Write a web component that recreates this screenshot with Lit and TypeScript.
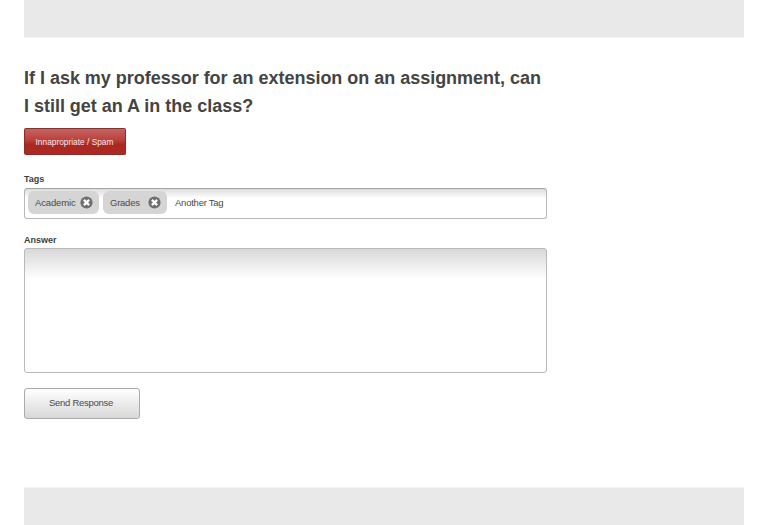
import { LitElement, html, css } from "lit";
import { customElement, property, state } from "lit/decorators.js";

@customElement("tag-chip")
class TagChip extends LitElement {
  @property() label = "";

  static styles = css`
    :host {
      display: flex;
      align-items: center;
      justify-content: space-between;
      box-sizing: border-box;
      height: 23px;
      padding: 0 6px 0 7px;
      border-radius: 6px;
      background: #d5d5d5;
      color: #4a4a4a;
    }
    svg {
      display: block;
      width: 13px;
      height: 13px;
    }
  `;

  render() {
    return html`<span>${this.label}</span>
      <svg viewBox="0 0 13 13">
        <circle cx="6.5" cy="6.5" r="6.1" fill="#6e6e6e" />
        <path d="M3.9 3.9 9.1 9.1M9.1 3.9 3.9 9.1" stroke="#fff" stroke-width="2.2" />
      </svg>`;
  }
}

@customElement("app-root")
class AppRoot extends LitElement {
  @state() private tags = [
    { label: "Academic", kind: "academic" },
    { label: "Grades", kind: "grades" },
  ];

  static styles = css`
    :host {
      display: flex;
      flex-direction: column;
      box-sizing: border-box;
      height: 525px;
      padding: 0 24px;
      background: #fff;
      overflow: hidden;
      font: 9px/12px "Liberation Sans", Arial, sans-serif;
      color: #464646;
    }
    .bar {
      flex: none;
      height: 37px;
      background: #e9e9e9;
    }
    .top {
      border-bottom: 1px solid #f4f4f4;
    }
    .bottom {
      border-top: 1px solid #f4f4f4;
    }
    main {
      flex: 1;
      width: 523px;
      display: flex;
      flex-direction: column;
      align-items: flex-start;
      padding-top: 26px;
      box-sizing: border-box;
    }
    h1 {
      margin: 0;
      font-size: 18px;
      line-height: 28px;
      font-weight: bold;
      letter-spacing: -0.02px;
      color: #444;
      white-space: nowrap;
    }
    button {
      box-sizing: border-box;
      padding: 0;
      font: inherit;
      border-radius: 3px;
    }
    .spam {
      width: 102px;
      height: 27px;
      margin-top: 8px;
      padding-right: 1px;
      border: 1px solid #8f2a25;
      border-top-color: #7d3532;
      border-radius: 2px;
      background: linear-gradient(#c66361, #b9403c 45%, #ab2722 62%, #ad2a24);
      color: #f9e9e8;
      font-size: 8.3px;
      letter-spacing: 0.02px;
    }
    label {
      font-weight: bold;
      color: #3e3e3e;
    }
    .tags-label {
      margin-top: 18px;
    }
    .field {
      box-sizing: border-box;
      width: 523px;
      border: 1px solid #b9b9b9;
      border-radius: 3px;
    }
    .tags {
      display: flex;
      align-items: flex-start;
      gap: 4px;
      height: 31px;
      margin-top: 3px;
      padding: 2px 3px 0;
      border-top-color: #a4a4a4;
      background: linear-gradient(#dcdcdc, #fff 9px);
      font-size: 9.5px;
      letter-spacing: -0.24px;
    }
    .academic {
      width: 71px;
      letter-spacing: -0.14px;
    }
    .grades {
      width: 64px;
    }
    .entry {
      margin-left: 4px;
      line-height: 23px;
      color: #4a4a4a;
    }
    .answer-label {
      margin-top: 15px;
    }
    .answer {
      height: 125px;
      margin-top: 2px;
      background: linear-gradient(#d8d8d8, #fff 30px);
    }
    .send {
      width: 116px;
      height: 31px;
      margin-top: 15px;
      padding: 0 2px 1px 0;
      border: 1px solid #aaa;
      background: linear-gradient(#fff, #d8d8d8);
      color: #4a4a4a;
      font-size: 9.5px;
      letter-spacing: -0.26px;
    }
  `;

  render() {
    return html`
      <header class="bar top"></header>
      <main>
        <h1>
          If I ask my professor for an extension on an assignment, can<br />I still get an A in the
          class?
        </h1>
        <button class="spam">Innapropriate / Spam</button>
        <label class="tags-label">Tags</label>
        <div class="field tags">
          ${this.tags.map((t) => html`<tag-chip class=${t.kind} .label=${t.label}></tag-chip>`)}
          <span class="entry">Another Tag</span>
        </div>
        <label class="answer-label">Answer</label>
        <div class="field answer"></div>
        <button class="send">Send Response</button>
      </main>
      <footer class="bar bottom"></footer>
    `;
  }
}
